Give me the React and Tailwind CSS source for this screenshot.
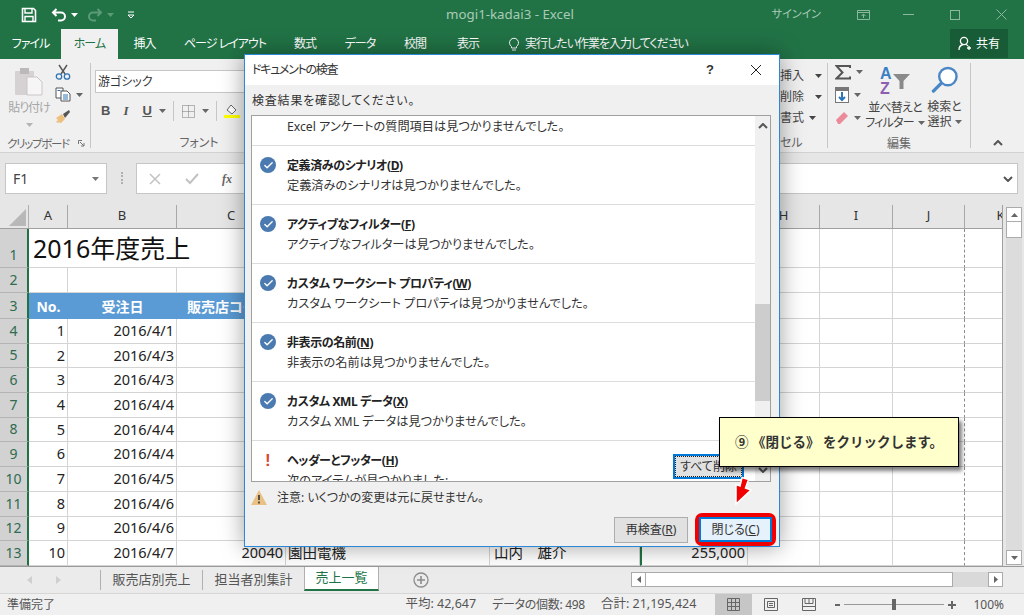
import React from 'react';
import { Check } from 'lucide-react';

const colWidths = ['w-[39px]', 'w-[109px]', 'w-[109px]', 'w-[204px]', 'w-[150px]', 'w-[108px]', 'w-[72px]', 'w-[73px]', 'w-[72px]', 'w-[72px]'];
const colNames = ['A', 'B', 'C', 'D', 'E', 'G', 'H', 'I', 'J', 'K'];
const dates = ['2016/4/1', '2016/4/3', '2016/4/3', '2016/4/4', '2016/4/4', '2016/4/4', '2016/4/5', '2016/4/6', '2016/4/6', '2016/4/7'];

const tabs = [
  ['ファイル', 'w-[61px]'],
  ['ホーム', 'w-[57px]'],
  ['挿入', 'w-[53px]'],
  ['ページ レイアウト', 'w-[108px]'],
  ['数式', 'w-[52px]'],
  ['データ', 'w-[58px]'],
  ['校閲', 'w-[52px]'],
  ['表示', 'w-[54px]'],
];

const results = [
  ['定義済みのシナリオ', 'D', '定義済みのシナリオは見つかりませんでした。'],
  ['アクティブなフィルター', 'F', 'アクティブなフィルターは見つかりませんでした。'],
  ['カスタム ワークシート プロパティ', 'W', 'カスタム ワークシート プロパティは見つかりませんでした。'],
  ['非表示の名前', 'N', '非表示の名前は見つかりませんでした。'],
  ['カスタム XML データ', 'X', 'カスタム XML データは見つかりませんでした。'],
];

function Caret({ className = 'text-[#666]' }) {
  return (
    <svg width="7" height="4" viewBox="0 0 7 4" className={className}>
      <path d="M0 0h7L3.5 4z" fill="currentColor" />
    </svg>
  );
}

function Chevron({ up, className = '' }) {
  return (
    <svg width="10" height="6" viewBox="0 0 10 6" className={className}>
      <path d={up ? 'M1 5l4-4 4 4' : 'M1 1l4 4 4-4'} fill="none" stroke="#555" strokeWidth="2" />
    </svg>
  );
}

function Row({ height, num, children }) {
  return (
    <div className={`flex ${height}`}>
      <div className="w-[29px] shrink-0 bg-[#d2d2d2] border-r-2 border-[#217346] border-b border-b-[#b4b4b4] flex items-end justify-center text-[14px] text-[#2f6b50] leading-[24px]">
        {num}
      </div>
      {children}
    </div>
  );
}

function Cell({ col, className = 'border-r', children }) {
  const dashed = col === 8 ? 'border-r-[#8c8c8c] [border-right-style:dashed]' : 'border-r-[#d4d4d4]';
  return (
    <div className={`${colWidths[col]} shrink-0 border-b border-b-[#d4d4d4] ${dashed} ${className} flex items-center text-[14.5px] text-[#222] overflow-hidden whitespace-nowrap px-[2px]`}>
      {children}
    </div>
  );
}

function TitleBar() {
  return (
    <div className="h-[29px] bg-[#217346] flex items-center relative text-[#a9cbb6] text-[12px] shrink-0">
      <div className="flex items-center pl-[21px]">
        <svg width="16" height="16" viewBox="0 0 16 16">
          <path d="M1.5 1.5h11l2 2v11h-13z" fill="none" stroke="#fff" strokeWidth="1.6" />
          <path d="M4 2v4h7V2M4 14V9.5h8V14" fill="none" stroke="#fff" strokeWidth="1.4" />
        </svg>
        <svg width="16" height="15" viewBox="0 0 16 15" className="ml-[14px]">
          <path d="M5.5 2L2 5.5 5.5 9M2 5.5h8a4 4 0 0 1 0 8H7" fill="none" stroke="#fff" strokeWidth="2" />
        </svg>
        <Caret className="text-white ml-[4px]" />
        <svg width="16" height="15" viewBox="0 0 16 15" className="ml-[9px]">
          <path d="M10.5 2L14 5.5 10.5 9M14 5.5H6a4 4 0 0 0 0 8h3" fill="none" stroke="#5d9a77" strokeWidth="2" />
        </svg>
        <Caret className="text-[#5d9a77] ml-[4px]" />
        <svg width="8" height="8" viewBox="0 0 8 8" className="ml-[13px]">
          <path d="M1 1h6M1 4h6l-3 3z" fill="none" stroke="#fff" strokeWidth="1" />
        </svg>
      </div>
      <div className="ml-[310px] w-[130px] text-center text-[13.300px] whitespace-nowrap">mogi1-kadai3 - Excel</div>
      <div className="ml-auto flex items-center">
        <span className="text-[11px]">サインイン</span>
        <svg width="13" height="10" viewBox="0 0 13 10" className="ml-[36px]">
          <path d="M.5.5h12v9H.5zM.5 2.5h12M6.5 8V4M4.5 6l2-2 2 2" fill="none" stroke="#8db8a0" />
        </svg>
        <div className="w-[11px] h-px bg-[#8db8a0] ml-[33px]" />
        <div className="w-[10px] h-[10px] border border-[#8db8a0] ml-[36px]" />
        <svg width="11" height="11" viewBox="0 0 11 11" className="ml-[36px] mr-[17px]">
          <path d="M.5.5l10 10M10.5.5l-10 10" stroke="#8db8a0" />
        </svg>
      </div>
    </div>
  );
}

function RibbonTabs() {
  return (
    <div className="h-[30px] bg-[#217346] flex text-[12px] text-white shrink-0">
      {tabs.map(([label, width]) => (
        <div
          key={label}
          className={`${width} flex items-center justify-center tracking-[-1px] ${label === 'ホーム' ? 'bg-[#f0f0f0] text-[#217346]' : ''}`}
        >
          {label}
        </div>
      ))}
      <div className="flex items-center ml-[13px]">
        <svg width="12" height="14" viewBox="0 0 12 14">
          <path d="M3.5 9.5a4.5 4.5 0 1 1 5 0V11h-5zM4 13h4" fill="none" stroke="#fff" />
        </svg>
        <span className="ml-[5px] tracking-[-1px]">実行したい作業を入力してください</span>
      </div>
      <div className="ml-auto mr-[16px] w-[58px] h-[29px] bg-[#185c37] flex items-center justify-center">
        <svg width="15" height="15" viewBox="0 0 15 15">
          <circle cx="6" cy="5" r="3.6" fill="none" stroke="#fff" strokeWidth="1.3" />
          <path d="M1 14c0-3 2-5 4-5.5M8 8.500c.8.300 1.500.8 2 1.500M11 10v4M9 12h4" fill="none" stroke="#fff" strokeWidth="1.3" />
        </svg>
        <span className="ml-[3px]">共有</span>
      </div>
    </div>
  );
}

function Sep({ className = 'h-[85px]' }) {
  return <div className={`w-px bg-[#c6c6c6] shrink-0 ${className}`} />;
}

function Ribbon() {
  return (
    <div className="h-[94px] bg-[#f0f0f0] border-b border-[#d2d2d2] flex justify-between text-[#444] text-[12px] shrink-0">
      <div className="flex">
        <div className="w-[90px] flex flex-col relative">
          <div className="flex h-[70px]">
            <div className="w-[55px] flex flex-col items-center pt-[8px] pl-[3px]">
              <svg width="30" height="29" viewBox="0 0 30 29">
                <rect x="1" y="4" width="19" height="24" rx="1" fill="#d6d2d4" />
                <rect x="6" y="1" width="9" height="6" fill="#bdb9bb" />
                <path d="M13 10h10l5 5v13H13z" fill="#f6f6f6" stroke="#c9c5c7" />
              </svg>
              <span className="text-[12px] text-[#a6a6a6] mt-[3px] tracking-[-1px] whitespace-nowrap">貼り付け</span>
              <Caret className="text-[#b4b4b4] mt-[6px]" />
            </div>
            <div className="flex flex-col pt-[5px] gap-[7px]">
              <svg width="16" height="16" viewBox="0 0 16 16">
                <path d="M4 1l6 9M12 1L6 10" stroke="#555" strokeWidth="1.4" />
                <circle cx="4" cy="12.500" r="2.700" fill="none" stroke="#2f75b5" strokeWidth="1.3" />
                <circle cx="12" cy="12.500" r="2.700" fill="none" stroke="#2f75b5" strokeWidth="1.3" />
              </svg>
              <div className="flex items-center gap-[5px]">
                <svg width="16" height="15" viewBox="0 0 16 15">
                  <path d="M1 1h7v10H1z" fill="#fff" stroke="#555" />
                  <path d="M6 4h6l3 3v7H6z" fill="#fff" stroke="#555" />
                  <path d="M8 8h5M8 10h5M8 12h5M2.500 3.500h3" stroke="#2f75b5" />
                </svg>
                <Caret />
              </div>
              <svg width="16" height="15" viewBox="0 0 16 15">
                <path d="M1 9l6-4 3 5-4 4H4l1-2-2 2-2-1 2-2z" fill="#eec07e" />
                <path d="M8 5l6-4 1 2-5 6z" fill="#555" />
              </svg>
            </div>
          </div>
          <div className="flex items-center justify-between pl-[7px] pr-[5px] pt-[7px] text-[11.500px] text-[#666] whitespace-nowrap">
            <span className="tracking-[-1.300px]">クリップボード</span>
            <svg width="7" height="7" viewBox="0 0 7 7">
              <path d="M.5 4V.5H4M2 2l4 4M3 6h3V3" fill="none" stroke="#777" />
            </svg>
          </div>
        </div>
        <Sep className="h-[85px] mt-[4px]" />
        <div className="w-[154px] pl-[4px]">
          <div className="mt-[11px] h-[23px] bg-white border border-[#c6c6c6] text-[12px] text-[#333] flex items-center pl-[2px]">
            游ゴシック
          </div>
          <div className="flex items-center h-[30px] mt-[3px] text-[13px] text-[#555]">
            <span className="font-bold ml-[6px] font-['Liberation_Sans']">B</span>
            <span className="italic font-bold ml-[13px] font-['Liberation_Serif']">I</span>
            <span className="font-bold underline ml-[14px] font-['Liberation_Sans']">U</span>
            <Caret className="text-[#666] ml-[7px]" />
            <Sep className="h-[20px] ml-[7px]" />
            <svg width="13" height="13" viewBox="0 0 13 13" className="ml-[8px]">
              <path d="M.5.500h12v12H.5zM6.500.500v12M.5 6.500h12" fill="none" stroke="#777" strokeDasharray="1 1" />
            </svg>
            <Caret className="text-[#666] ml-[7px]" />
            <Sep className="h-[20px] ml-[7px]" />
            <div className="ml-[7px] flex flex-col items-center">
              <svg width="14" height="11" viewBox="0 0 14 11">
                <path d="M6 1l5 5-4 4-5-4z" fill="#fff" stroke="#666" />
              </svg>
              <div className="w-[16px] h-[3px] bg-[#ffff00]" />
            </div>
          </div>
          <div className="text-center text-[12px] text-[#666] mt-[8px] pl-[58px]">フォント</div>
        </div>
      </div>
      <div className="flex w-[244px]">
        <div className="w-[47px] flex flex-col pt-[6px] text-[12px] text-[#444]">
          <div className="flex items-center h-[22px]">挿入<Caret className="ml-[11px]" /></div>
          <div className="flex items-center h-[22px]">削除<Caret className="ml-[11px]" /></div>
          <div className="flex items-center h-[22px]">書式<Caret className="ml-[5px]" /></div>
          <div className="text-[12px] text-[#666] pt-[5px]">セル</div>
        </div>
        <Sep className="h-[85px] mt-[4px]" />
        <div className="w-[142px] flex flex-col relative">
          <div className="flex h-[70px]">
            <div className="w-[41px] pl-[7px] pt-[4px] flex flex-col">
              <div className="flex items-center gap-[5px] h-[18px]">
                <svg width="16" height="15" viewBox="0 0 16 15">
                  <path d="M15 3V1H1.500l6 6.500-6 6H15v-2" fill="none" stroke="#555" strokeWidth="2" />
                </svg>
                <Caret />
              </div>
              <div className="flex items-center gap-[5px] h-[18px] mt-[5px]">
                <svg width="14" height="16" viewBox="0 0 14 16">
                  <rect x=".5" y=".5" width="13" height="15" fill="#fff" stroke="#777" />
                  <rect x="0" y="0" width="14" height="4" fill="#777" />
                  <path d="M7 5v8M4 10l3 3 3-3" fill="none" stroke="#2f75b5" strokeWidth="2" />
                </svg>
                <Caret />
              </div>
              <div className="flex items-center gap-[5px] h-[18px] mt-[5px]">
                <svg width="14" height="14" viewBox="0 0 14 14">
                  <path d="M1 9l8-8 4 4-8 8H3z" fill="#ea8a9b" />
                </svg>
                <Caret />
              </div>
            </div>
            <div className="w-[52px] flex flex-col items-center pt-[7px] text-[#444] leading-[15px] whitespace-nowrap">
              <svg width="30" height="28" viewBox="0 0 30 28" className="overflow-visible">
                <text x="0" y="13" fontSize="16" fontWeight="700" fill="#3b7fc4" fontFamily="Liberation Sans">A</text>
                <text x="0" y="28" fontSize="16" fontWeight="700" fill="#8e5fb0" fontFamily="Liberation Sans">Z</text>
                <path d="M13 8h17l-6.500 7v8h-4v-8z" fill="#8a8a8a" />
              </svg>
              <span className="mt-[6px] tracking-[-0.800px]">並べ替えと</span>
              <span className="flex items-center gap-[4px] tracking-[-0.800px]">フィルター<Caret /></span>
            </div>
            <div className="w-[47px] flex flex-col items-center pt-[7px] leading-[15px] whitespace-nowrap">
              <svg width="29" height="28" viewBox="0 0 29 28">
                <circle cx="18" cy="11" r="9" fill="#fff" stroke="#4a87c7" strokeWidth="2.500" />
                <path d="M11 18l-8 8" stroke="#4a87c7" strokeWidth="3.500" strokeLinecap="round" />
              </svg>
              <span className="mt-[6px]">検索と</span>
              <span className="flex items-center gap-[3px]">選択<Caret /></span>
            </div>
          </div>
          <div className="text-center text-[12px] text-[#666] pt-[6px]">編集</div>
        </div>
        <Sep className="h-[85px] mt-[4px]" />
        <div className="flex-1 flex items-end justify-center pb-[6px]">
          <Chevron up />
        </div>
      </div>
    </div>
  );
}

function FormulaBar() {
  return (
    <div className="h-[52px] bg-[#e6e6e6] flex items-start pt-[10px] pl-[5px] pr-[6px] shrink-0">
      <div className="w-[102px] h-[31px] bg-white border border-[#c6c6c6] flex items-center justify-between px-[7px] text-[14px] text-[#444]">
        F1
        <Caret className="text-[#777]" />
      </div>
      <div className="w-[2px] h-[12px] border-l-2 border-dotted border-[#b0b0b0] ml-[14px] mt-[9px]" />
      <div className="ml-[13px] flex-1 h-[31px] bg-white border border-[#c6c6c6] flex items-center pl-[12px] pr-[4px]">
        <svg width="12" height="12" viewBox="0 0 12 12">
          <path d="M1 1l10 10M11 1L1 11" stroke="#c2c2c2" strokeWidth="1.500" />
        </svg>
        <svg width="14" height="12" viewBox="0 0 14 12" className="ml-[24px]">
          <path d="M1 6l4 4 8-9" fill="none" stroke="#c2c2c2" strokeWidth="2" />
        </svg>
        <span className="ml-[23px] italic text-[12px] text-[#666] font-['Liberation_Serif'] font-bold">fx</span>
        <Chevron className="ml-auto" />
      </div>
    </div>
  );
}

function Sheet() {
  return (
    <div className="h-[361px] flex shrink-0 bg-[#e6e6e6]">
      <div className="w-[1003px] overflow-hidden border-r border-[#a0a0a0] flex flex-col">
        <div className="flex h-[24px] shrink-0 border-b border-[#a0a0a0]">
          <div className="w-[29px] shrink-0 border-r border-[#b0b0b0] flex items-end justify-end p-[2px]">
            <svg width="17" height="17" viewBox="0 0 17 17"><path d="M17 0v17H0z" fill="#b8b8b8" /></svg>
          </div>
          {colNames.map((name, i) => (
            <div
              key={name}
              className={`${colWidths[i]} shrink-0 border-r border-[#a8a8a8] flex items-center justify-center text-[13px] text-[#333] pb-[1px]`}
            >
              {name}
            </div>
          ))}
        </div>
        <div className="bg-white flex-1">
          <Row height="h-[39px]" num="1">
            <div className="w-[148px] shrink-0 border-b border-[#d4d4d4] pl-[4px] text-[25px] leading-[39px] text-[#111] whitespace-nowrap overflow-visible">
              2016年度売上
            </div>
            {colWidths.slice(2).map((w, i) => <Cell key={i} col={i + 2} />)}
          </Row>
          <Row height="h-[25px]" num="2">
            {colWidths.map((w, i) => <Cell key={i} col={i} />)}
          </Row>
          <Row height="h-[26px]" num="3">
            <div className="w-[39px] shrink-0 bg-[#5b9bd5] text-white font-bold text-[14px] flex items-center justify-center">No.</div>
            <div className="w-[109px] shrink-0 bg-[#5b9bd5] text-white font-bold text-[14px] flex items-center justify-center">受注日</div>
            <div className="w-[109px] shrink-0 bg-[#5b9bd5] text-white font-bold text-[14px] flex items-center pl-[10px] whitespace-nowrap overflow-hidden">販売店コード</div>
            <div className="w-[462px] shrink-0 bg-[#5b9bd5]" />
            {colWidths.slice(6).map((w, i) => <Cell key={i} col={i + 6} />)}
          </Row>
          {dates.map((date, i) => (
            <Row key={date + i} height="h-[24.7px]" num={i + 4}>
              <Cell col={0} className="border-r justify-end">{i + 1}</Cell>
              <Cell col={1} className="border-r justify-end">{date}</Cell>
              <Cell col={2} className="border-r justify-end">{i === 9 ? '20040' : ''}</Cell>
              <Cell col={3} className="border-r">{i === 9 ? '園田電機' : ''}</Cell>
              <Cell col={4} className="border-r"><span className="pl-[2px]">{i === 9 ? '山内　雄介' : ''}</span></Cell>
              <Cell col={5} className="border-r border-l-2 border-l-[#217346] justify-end">{i === 9 ? '255,000' : ''}</Cell>
              {colWidths.slice(6).map((w, j) => <Cell key={j} col={j + 6} />)}
            </Row>
          ))}
        </div>
      </div>
      <div className="w-[21px] pl-[3px] pr-[2px] flex flex-col pt-[2px] pb-[1px]">
        <div className="h-[15px] bg-white border border-[#ababab] flex items-center justify-center">
          <svg width="7" height="4" viewBox="0 0 7 4"><path d="M0 4h7L3.500 0z" fill="#666" /></svg>
        </div>
        <div className="h-[16px] bg-white border border-[#ababab] border-t-0" />
        <div className="flex-1 bg-[#dcdcdc]" />
        <div className="h-[15px] bg-white border border-[#ababab] flex items-center justify-center">
          <Caret />
        </div>
      </div>
    </div>
  );
}

function SheetTabs() {
  return (
    <div className="h-[27px] bg-[#ebebeb] border-t border-[#9a9a9a] flex text-[13px] text-[#555] shrink-0">
      <div className="w-[100px] flex items-center pl-[27px] gap-[24px]">
        <svg width="5" height="8" viewBox="0 0 5 8"><path d="M5 0v8L0 4z" fill="#cfcfcf" /></svg>
        <svg width="5" height="8" viewBox="0 0 5 8"><path d="M0 0v8l5-4z" fill="#cfcfcf" /></svg>
      </div>
      <div className="w-[102px] flex items-center justify-center border-l border-[#b0b0b0] my-[3px]">販売店別売上</div>
      <div className="w-[102px] flex items-center justify-center border-l border-[#b0b0b0] my-[3px]">担当者別集計</div>
      <div className="w-[75px] h-[24px] bg-white border-b-2 border-[#217346] border-x border-x-[#b0b0b0] text-[#217346] flex items-center justify-center">
        売上一覧
      </div>
      <svg width="16" height="16" viewBox="0 0 16 16" className="ml-[34px] mt-[5px]">
        <circle cx="8" cy="8" r="7" fill="none" stroke="#8c8c8c" strokeWidth="1.300" />
        <path d="M8 4v8M4 8h8" stroke="#8c8c8c" strokeWidth="1.600" />
      </svg>
      <div className="ml-[202px] mt-[5px] w-[372px] h-[15px] flex bg-[#d9d9d9]">
        <div className="w-[15px] bg-white border border-[#ababab] flex items-center justify-center">
          <svg width="4" height="7" viewBox="0 0 4 7"><path d="M4 0v7L0 3.500z" fill="#666" /></svg>
        </div>
        <div className="w-[307px] bg-white border-y border-r border-[#ababab]" />
        <div className="ml-auto w-[15px] bg-white border border-[#ababab] flex items-center justify-center">
          <svg width="4" height="7" viewBox="0 0 4 7"><path d="M0 0v7l4-3.500z" fill="#666" /></svg>
        </div>
      </div>
    </div>
  );
}

function StatusBar() {
  return (
    <div className="h-[22px] bg-[#f0f0f0] border-t border-[#d6d6d6] flex items-center text-[12px] text-[#555] shrink-0">
      <span className="pl-[7px]">準備完了</span>
      <span className="ml-auto text-[12.500px]">平均: 42,647</span>
      <span className="ml-[16px] tracking-[-0.300px]">データの個数: 498</span>
      <span className="ml-[16px] text-[12.500px]">合計: 21,195,424</span>
      <div className="ml-[19px] w-[37px] h-[21px] bg-[#c6c6c6] flex items-center justify-center">
        <svg width="13" height="13" viewBox="0 0 13 13"><path d="M.5.500h12v12H.5zM4.500.500v12M8.500.500v12M.5 4.500h12M.5 8.500h12" fill="none" stroke="#666" /></svg>
      </div>
      <div className="w-[38px] flex justify-center">
        <svg width="14" height="13" viewBox="0 0 14 13"><path d="M.5.500h13v12H.5zM3.500 3.500h7v6h-7zM5 5.500h4M5 7.500h4" fill="none" stroke="#666" /></svg>
      </div>
      <div className="w-[38px] flex justify-center">
        <svg width="14" height="13" viewBox="0 0 14 13"><path d="M.5.500h13v12H.5zM.5 8.500h13M7 .500v5M3 .500v5h8v-5" fill="none" stroke="#666" /></svg>
      </div>
      <div className="w-[5px] h-[2px] bg-[#666] ml-[7px]" />
      <div className="w-[100px] h-px bg-[#999] mx-[4px] flex items-center justify-center">
        <div className="w-[4px] h-[11px] bg-[#666] -ml-[1px]" />
      </div>
      <svg width="8" height="8" viewBox="0 0 8 8"><path d="M4 0v8M0 4h8" stroke="#666" strokeWidth="2" /></svg>
      <span className="ml-[17px] mr-[20px]">100%</span>
    </div>
  );
}

function Title({ text, letter }) {
  return (
    <div className="font-bold text-[12px] leading-[18px] text-[#222] tracking-[-0.400px]">
      {text}(<span className="underline">{letter}</span>)
    </div>
  );
}

function ResultRow({ title, letter, desc }) {
  return (
    <div className="h-[59px] border-t border-[#dcdcdc] flex items-start pt-[11px] shrink-0">
      <div className="w-[35px] pl-[8px]">
        <div className="w-[16px] h-[16px] rounded-full bg-[#4a7ab0] flex items-center justify-center">
          <Check size={11} color="#fff" strokeWidth={3} />
        </div>
      </div>
      <div>
        <Title text={title} letter={letter} />
        <div className="text-[12.200px] leading-[21px] text-[#333]">{desc}</div>
      </div>
    </div>
  );
}

function InspectDialog() {
  return (
    <div className="absolute left-[244px] top-[54px] w-[536px] h-[493px] bg-[#f0f0f0] border border-[#2b88d8] shadow-[0_0_22px_rgba(0,0,0,0.38)] flex flex-col">
      <div className="h-[30px] bg-white flex items-center pl-[7px] text-[12px] text-[#333] shrink-0">
        <span className="tracking-[-1.300px]">ドキュメントの検査</span>
        <span className="ml-auto text-[13px] font-bold font-['Liberation_Sans'] text-[#333]">?</span>
        <svg width="12" height="12" viewBox="0 0 12 12" className="ml-[36px] mr-[17px]">
          <path d="M1 1l10 10M11 1L1 11" stroke="#222" />
        </svg>
      </div>
      <div className="h-[30px] flex items-center pl-[7px] pt-[2px] text-[12px] tracking-[0.800px] text-[#333] shrink-0">検査結果を確認してください。</div>
      <div className="mx-[6px] h-[367px] w-[520px] border border-[#a0a0a0] bg-white flex shrink-0 overflow-hidden">
        <div className="w-[503px] flex flex-col overflow-hidden">
          <div className="h-[29px] pl-[35px] text-[12.200px] text-[#333] leading-[21px] shrink-0">
            Excel アンケートの質問項目は見つかりませんでした。
          </div>
          {results.map(([title, letter, desc]) => (
            <ResultRow key={letter} title={title} letter={letter} desc={desc} />
          ))}
          <div className="h-[59px] border-t border-[#dcdcdc] flex pt-[11px] shrink-0">
            <div className="w-[35px] pl-[13px] text-[#d9482b] font-bold text-[17px] leading-[18px] font-['Liberation_Sans']">!</div>
            <div>
              <Title text="ヘッダーとフッター" letter="H" />
              <div className="text-[12.200px] leading-[21px] text-[#333]">次のアイテムが見つかりました:</div>
            </div>
            <div className="ml-auto mr-[11px] mt-[2px] w-[71px] h-[25px] border-2 border-[#0078d7] bg-[#e1e1e1] flex items-center justify-center text-[12px] text-[#333] outline-1 outline-dotted outline-[#222] -outline-offset-3">
              すべて削除
            </div>
          </div>
        </div>
        <div className="w-[15px] bg-[#f0f0f0] flex flex-col items-center">
          <div className="h-[17px] flex items-center justify-center mt-[1px]"><Chevron up /></div>
          <div className="h-[170px]" />
          <div className="w-full h-[97px] bg-[#cdcdcd]" />
          <div className="mt-auto h-[22px] flex items-center"><Chevron /></div>
        </div>
      </div>
      <div className="h-[31px] flex items-center pl-[6px] text-[12px] text-[#333] shrink-0">
        <svg width="16" height="15" viewBox="0 0 16 15">
          <path d="M8 0l8 15H0z" fill="#e9c184" />
          <path d="M8 5v5M8 11.500v2" stroke="#333" strokeWidth="1.600" />
        </svg>
        <span className="ml-[10px]">注意: いくつかの変更は元に戻せません。</span>
      </div>
      <div className="flex items-start justify-end pr-[3px] text-[12px] text-[#333]">
        <div className="mt-[4px] w-[74px] h-[26px] bg-[#e1e1e1] border border-[#adadad] flex items-center justify-center">
          再検査(<span className="underline">R</span>)
        </div>
        <div className="ml-[7px] border-[4px] border-[#f00000] rounded-[7px]">
          <div className="w-[73px] h-[25px] border-2 border-[#0078d7] bg-[#e5f1fb] flex items-center justify-center">
            閉じる(<span className="underline">C</span>)
          </div>
        </div>
      </div>
    </div>
  );
}

export default function App() {
  return (
    <div className="relative w-[1024px] h-[615px] overflow-hidden flex flex-col font-['Noto_Sans','Noto_Sans_CJK_JP',sans-serif] [font-feature-settings:'palt']">
      <TitleBar />
      <RibbonTabs />
      <Ribbon />
      <FormulaBar />
      <Sheet />
      <SheetTabs />
      <StatusBar />
      <InspectDialog />

      <div className="absolute left-[719px] top-[417px] w-[240px] h-[50px] bg-[#ffffcc] border border-black shadow-[3px_4px_4px_rgba(0,0,0,0.5)] flex items-center justify-center text-[13.500px] font-bold text-[#333] [font-feature-settings:normal] whitespace-nowrap">
        ⑨ 《閉じる》 をクリックします。
      </div>
      <svg width="30" height="40" viewBox="0 0 30 40" className="absolute left-[728px] top-[472px]">
        <path
          d="M14 5.500L20.500 7.500L17.500 16L23 18L8 32L8 12.500L12 14z"
          fill="#f00000"
          stroke="#fff"
          strokeWidth="1.500"
        />
      </svg>
    </div>
  );
}
